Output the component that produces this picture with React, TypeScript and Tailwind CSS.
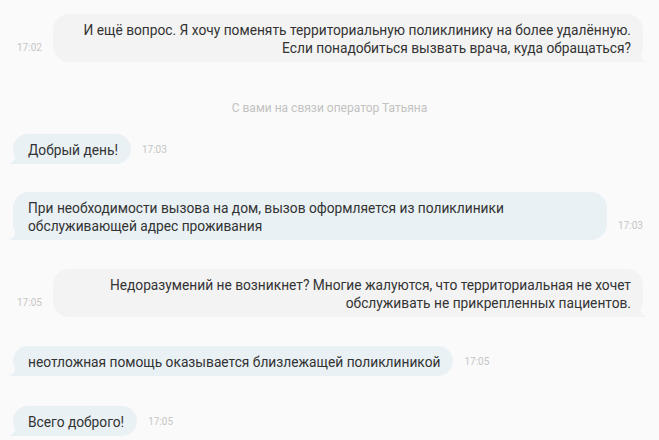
import React from 'react';

const Tail = ({ side, color }: { side: 'left' | 'right'; color: string }) => (
  <svg
    width="16"
    height="12"
    viewBox="0 0 16 12"
    className={`absolute bottom-0 ${side === 'left' ? 'left-[-4px]' : 'right-[-4px] -scale-x-100'}`}
  >
    <path d="M0 12 C4 10.5 7 7 7 0 L16 0 L16 12 Z" fill={color} />
  </svg>
);

const Time = ({ children }: { children: React.ReactNode }) => (
  <div className="text-[10px] leading-[12px] text-[#c6c6c6] mb-[8px] shrink-0">{children}</div>
);

const Outgoing = ({ time, children }: { time: string; children: React.ReactNode }) => (
  <div className="flex items-end pl-[17px] pr-[16px] gap-[11px]">
    <Time>{time}</Time>
    <div className="relative flex-1 bg-[#f3f3f3] rounded-[16px] pt-[7px] pb-[5px] pl-[14px] pr-[12px] text-right text-[13.75px] leading-[18px] text-[#333]">
      {children}
      <Tail side="right" color="#f3f3f3" />
    </div>
  </div>
);

const Incoming = ({ time, children }: { time: string; children: React.ReactNode }) => (
  <div className="flex items-end pl-[13px] pr-[16px] gap-[11px]">
    <div className="relative bg-[#e9f1f5] rounded-[16px] pt-[7px] pb-[5px] pl-[15px] pr-[13px] text-[13.75px] leading-[18px] text-[#333]">
      {children}
      <Tail side="left" color="#e9f1f5" />
    </div>
    <Time>{time}</Time>
  </div>
);

export default function App() {
  return (
    <div className="min-h-[440px] w-full bg-[#fafafa] pt-[14px] font-['Roboto',sans-serif]">
      <Outgoing time="17:02">
        И ещё вопрос. Я хочу поменять территориальную поликлинику на более удалённую.
        <br />
        Если понадобиться вызвать врача, куда обращаться?
      </Outgoing>

      <div className="mt-[39px] text-center text-[12px] leading-[14px] text-[#c2c2c2]">
        С вами на связи оператор Татьяна
      </div>

      <div className="mt-[19px]">
        <Incoming time="17:03">Добрый день!</Incoming>
      </div>

      <div className="mt-[28px]">
        <Incoming time="17:03">
          <div className="w-[566px]">
            При необходимости вызова на дом, вызов оформляется из поликлиники
            <br />
            обслуживающей адрес проживания
          </div>
        </Incoming>
      </div>

      <div className="mt-[29px]">
        <Outgoing time="17:05">
          Недоразумений не возникнет? Многие жалуются, что территориальная не хочет
          <br />
          обслуживать не прикрепленных пациентов.
        </Outgoing>
      </div>

      <div className="mt-[29px]">
        <Incoming time="17:05">неотложная помощь оказывается близлежащей поликлиникой</Incoming>
      </div>

      <div className="mt-[30px]">
        <Incoming time="17:05">Всего доброго!</Incoming>
      </div>
    </div>
  );
}
